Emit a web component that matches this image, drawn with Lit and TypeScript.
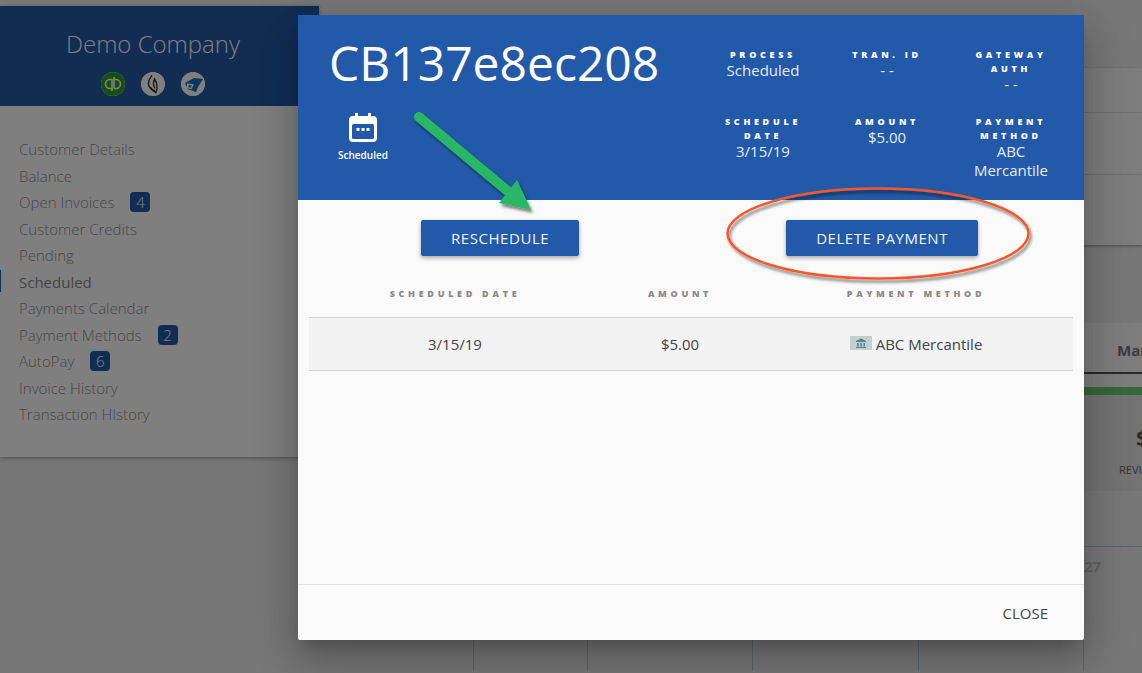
import { LitElement, html, css, svg } from "lit";
import { customElement } from "lit/decorators.js";

const NAV: [string, string?, boolean?][] = [
  ["Customer Details"], ["Balance"], ["Open Invoices", "4"], ["Customer Credits"], ["Pending"],
  ["Scheduled", undefined, true], ["Payments Calendar"], ["Payment Methods", "2"], ["AutoPay", "6"],
  ["Invoice History"], ["Transaction HIstory"],
];
const META: [string, string][] = [
  ["PROCESS", "Scheduled"], ["TRAN. ID", "- -"], ["GATEWAY AUTH", "- -"],
  ["SCHEDULE DATE", "3/15/19"], ["AMOUNT", "$5.00"], ["PAYMENT METHOD", "ABC Mercantile"],
];

@customElement("app-root")
export class AppRoot extends LitElement {
  static styles = css`
    :host { display: block; position: relative; width: 1142px; height: 673px; overflow: hidden; background: #efefef; font-family: "Open Sans", "Liberation Sans", sans-serif; }
    .page { display: flex; align-items: flex-start; height: 673px; }
    .side { width: 319px; flex: none; margin-top: 6px; height: 451px; background: #fff; box-shadow: 0 1px 4px rgba(0,0,0,.35); }
    .side-head { height: 100px; padding-right: 13px; background: #225aa9; display: flex; flex-direction: column; align-items: center; }
    .company { font-size: 24px; font-weight: 300; line-height: 33px; margin-top: 21px; color: #fff; }
    .logos { display: flex; gap: 16px; margin-top: 12px; }
    .logo { width: 24px; height: 24px; border-radius: 50%; background: #fff; display: block; }
    nav { padding-top: 29.9px; display: flex; flex-direction: column; }
    .item { position: relative; height: 26.5px; padding-left: 19px; display: flex; align-items: center; font-size: 15px; font-weight: 300; color: #8f8f8f; }
    .item.on { font-weight: 400; color: #8a8a8a; }
    .item.on::before { content: ""; position: absolute; left: 0; top: 2px; width: 1px; height: 22px; background: #225aa9; }
    .badge { margin-left: 16px; min-width: 20px; height: 20px; border-radius: 4px; background: #225aa9; color: #fff; font-size: 15px; font-weight: 300; display: flex; align-items: center; justify-content: center; }
    .main { flex: 1; min-width: 0; display: flex; flex-direction: column; overflow: hidden; }
    .card { margin-top: 68px; height: 177px; background: #fbfbfb; box-shadow: 0 1px 3px rgba(0,0,0,.4); display: flex; flex-direction: column; }
    .card div { border-bottom: 1px solid #ddd; }
    .r1 { height: 44px; } .r2 { height: 61px; }
    .panel { margin-top: 78px; height: 168px; background: #fafafa; display: flex; flex-direction: column; }
    .tabs { height: 51px; border-bottom: 2px solid #555; padding-left: 798px; display: flex; align-items: center; font-size: 15px; font-weight: 700; color: #777; white-space: nowrap; padding-top: 4px; box-sizing: border-box; }
    .green { height: 8px; margin-top: 13px; background: #6fce74; }
    .stats { flex: 1; background: #e6e6e6; padding-left: 800px; white-space: nowrap; }
    .dollar { font-size: 22px; font-weight: 700; color: #555; line-height: 28px; margin: 28px 0 0 17px; }
    .rev { font-size: 11px; color: #666; line-height: 15px; margin-top: 11px; }
    .cal { margin-top: 55px; display: grid; grid-template-columns: 154px 114px 165px 166px 165px 1fr; height: 124px; border-top: 1px solid #b9c9dc; }
    .cal div { border-left: 1px solid #b9c9dc; }
    .cal div:first-child { border-left: none; }
    .cal .d27 { font-size: 15px; font-weight: 700; color: #c4c4c4; line-height: 38px; }
    .shade { position: absolute; inset: 0; background: rgba(0,0,0,.5); }
    .modal { position: absolute; left: 298px; top: 15px; width: 786px; height: 625px; background: #fafafa; border-radius: 2px; display: flex; flex-direction: column;
      box-shadow: 0 24px 38px 3px rgba(0,0,0,.14), 0 9px 46px 8px rgba(0,0,0,.12), 0 11px 15px -7px rgba(0,0,0,.2); }
    .mhead { height: 185px; flex: none; background: #225aa9; color: #fff; display: flex; justify-content: space-between; }
    .left { padding: 15px 0 0 31px; }
    h1 { margin: 0; font-size: 48px; font-weight: 400; line-height: 65px; }
    .status { width: 68px; margin-top: 18px; display: flex; flex-direction: column; align-items: center; }
    .status svg { display: block; }
    .status span { font-size: 10px; font-weight: 600; line-height: 13px; margin-top: 7px; }
    .meta { display: grid; grid-template-columns: repeat(3, 92px); column-gap: 32px; grid-template-rows: 67px 1fr; padding: 33px 27px 0 0; text-align: center; }
    .lab { font-size: 9px; font-weight: 800; letter-spacing: 3.7px; line-height: 14px; }
    .val { font-size: 15px; line-height: 19px; color: #e6ecf6; margin-top: -1px; }
    .btns { display: flex; padding: 20px 0 0 123px; gap: 207px; }
    .btn { height: 36px; padding: 0 30px; background: #225aa9; color: #f0f4fa; border-radius: 2px; font-size: 15px; font-weight: 400; display: flex; align-items: center; box-shadow: 0 2px 4px rgba(0,0,0,.35); letter-spacing: .55px; white-space: nowrap; }
    .table { margin: 0 11px; }
    .tr { display: grid; grid-template-columns: 292px 158px 314px; text-align: center; align-items: center; }
    .th { margin-top: 30px; height: 31px; align-items: start; font-size: 9px; font-weight: 800; letter-spacing: 3.7px; color: #8a8a8a; line-height: 16px; }
    .td { height: 52px; background: #f2f2f2; border-top: 1px solid #d2d2d2; border-bottom: 1px solid #d2d2d2; font-size: 15px; color: #444; }
    .bank { display: inline-flex; align-items: baseline; gap: 4px; }
    .bank svg { display: block; align-self: flex-start; margin-top: 2px; }
    .spacer { flex: 1; }
    .foot { flex: none; height: 55px; border-top: 1px solid #e2e2e2; display: flex; justify-content: flex-end; align-items: center; padding-right: 36px; font-size: 15px; color: #444; }
    .ann { position: absolute; left: 0; top: 0; pointer-events: none; overflow: visible; }
  `;

  render() {
    return html`
      <div class="page">
        <aside class="side">
          <div class="side-head">
            <div class="company">Demo Company</div>
            <div class="logos">
              <svg class="logo" viewBox="0 0 24 24"><circle cx="12" cy="12" r="12" fill="#2ca01c"/><path d="M11 16.500H9a4.500 4.500 0 0 1 0-9h2v11.500M13 5v11.500V7.500h2a4.500 4.500 0 0 1 0 9h-2" fill="none" stroke="#fff" stroke-width="1.600"/></svg>
              <svg class="logo" viewBox="0 0 24 24"><circle cx="12" cy="12" r="12" fill="#fff"/><path d="M11 3.500C8 7 6.500 10 8 14c1.500 3 4 5 7 6.500 1.500-4 1.500-9-1.500-13.500-1.500 3-1.500 6 .5 9.500" fill="none" stroke="#333" stroke-width="1.400"/><path d="M9 15c1 2 3 3.500 5 4" fill="none" stroke="#111" stroke-width="1.600"/></svg>
              <svg class="logo" viewBox="0 0 24 24"><circle cx="12" cy="12" r="12" fill="#fff"/><path d="M4 11 13 6l9 1-5 8-2 5-3-1-5-2z" fill="#1c6fb8"/><path d="M6 11.500l7 .8-2.500 5-4.500-1.300z" fill="#fff"/><path d="M8 13l3 .4-1.300 2.400-2.500-.6z" fill="#1c6fb8"/></svg>
            </div>
          </div>
          <nav>
            ${NAV.map(([t, b, on]) => html`<div class="item ${on ? "on" : ""}">${t}${b ? html`<span class="badge">${b}</span>` : ""}</div>`)}
          </nav>
        </aside>
        <div class="main">
          <div class="card"><div class="r1"></div><div class="r2"></div></div>
          <div class="panel">
            <div class="tabs">Mar</div>
            <div class="green"></div>
            <div class="stats"><div class="dollar">$</div><div class="rev">REVI</div></div>
          </div>
          <div class="cal"><div></div><div></div><div></div><div></div><div></div><div class="d27">27</div></div>
        </div>
      </div>
      <div class="shade"></div>
      <section class="modal">
        <header class="mhead">
          <div class="left">
            <h1>CB137e8ec208</h1>
            <div class="status">
              <svg width="28" height="29" viewBox="0 0 28 29"><path d="M6 0h3v3h10V0h3v3h2a4 4 0 0 1 4 4v18a4 4 0 0 1-4 4H4a4 4 0 0 1-4-4V7a4 4 0 0 1 4-4h2z" fill="#fff"/><rect x="3" y="11" width="22" height="15" rx="1.500" fill="#225aa9"/><rect x="7.500" y="15" width="3" height="3" fill="#fff"/><rect x="12.500" y="15" width="3" height="3" fill="#fff"/><rect x="17.500" y="15" width="3" height="3" fill="#fff"/></svg>
              <span>Scheduled</span>
            </div>
          </div>
          <div class="meta">
            ${META.map(([l, v]) => html`<div><div class="lab">${l}</div><div class="val">${v}</div></div>`)}
          </div>
        </header>
        <div class="btns"><div class="btn">RESCHEDULE</div><div class="btn">DELETE PAYMENT</div></div>
        <div class="table">
          <div class="tr th"><div>SCHEDULED DATE</div><div>AMOUNT</div><div>PAYMENT METHOD</div></div>
          <div class="tr td"><div>3/15/19</div><div>$5.00</div><div>
            <span class="bank"><svg width="22" height="14" viewBox="0 0 22 14"><rect width="22" height="14" rx="1" fill="#c3d0cf"/><path d="M11 2.500 16 5v1H6V5zM7 7h1.600v3.500H7zM10.200 7h1.600v3.500h-1.600zM13.400 7H15v3.500h-1.600zM6 11h10v1H6z" fill="#4a8696"/></svg>ABC Mercantile</span>
          </div></div>
        </div>
        <div class="spacer"></div>
        <footer class="foot">CLOSE</footer>
      </section>
      <svg class="ann" width="1142" height="673" viewBox="0 0 1142 673">
        <defs>
          <filter id="sh" x="-20%" y="-20%" width="140%" height="140%"><feDropShadow dx="2" dy="3" stdDeviation="1.800" flood-color="#000" flood-opacity=".5"/></filter>
        </defs>
        ${svg`<g filter="url(#sh)">
          <path d="M419 117 L510 193" stroke="#2ab765" stroke-width="10" stroke-linecap="round" fill="none"/>
          <polygon points="517,180 531,210 499,203" fill="#2ab765"/>
        </g>
        <g filter="url(#sh)"><ellipse cx="878" cy="233.5" rx="150.500" ry="45" fill="none" stroke="#f9572a" stroke-width="2.500"/></g>`}
      </svg>
    `;
  }
}
